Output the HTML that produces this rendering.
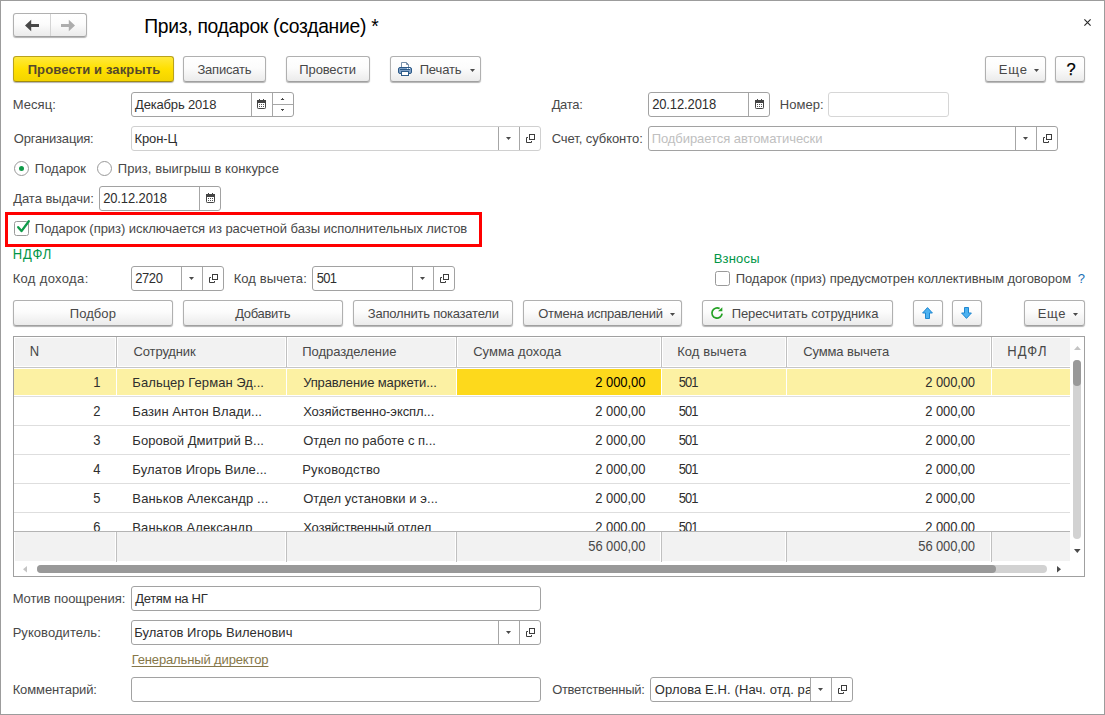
<!DOCTYPE html>
<html lang="ru">
<head>
<meta charset="utf-8">
<title>Приз, подарок (создание) *</title>
<style>
*{box-sizing:border-box;margin:0;padding:0}
html,body{width:1105px;height:715px;overflow:hidden;background:#fff}
body{font-family:"Liberation Sans",sans-serif;font-size:13px;color:#484848;position:relative;--sep:#a6a6a6}
#win{position:absolute;left:0;top:0;width:1105px;height:715px;border:1px solid #9c9c9c;background:#fff}
.a{position:absolute}
.t{position:absolute;white-space:nowrap}
.v{color:#2e2e2e}
.btn{position:absolute;border:1px solid #b0b0b0;border-bottom-color:#a0a0a0;border-radius:3px;background:linear-gradient(#ffffff 0%,#fcfcfc 45%,#ebebeb 100%);box-shadow:0 1px 1px rgba(0,0,0,.3)}
.btn.def{background:linear-gradient(#ffe93c 0%,#ffe000 50%,#f3d400 100%);border-color:#b9a21c;border-bottom-color:#a08a10}
.inp{position:absolute;border:1px solid #a2a2a2;border-radius:3px;background:#fff}
.inp.ro{border-color:#d6d6d6}
.inp.lt{border-color:#d0d0d0}
svg{position:absolute;display:block;overflow:visible}
</style>
</head>
<body>
<div id="win"></div>
<div class="btn " style="left:13px;top:13px;width:74px;height:24px"></div>
<div class="a" style="left:50px;top:14px;width:1px;height:22px;background:#d4d4d4"></div>
<svg style="left:25px;top:20px" width="14" height="11" viewBox="0 0 14 11"><path d="M0 5.5L6.2 -0.3V4H14V7H6.2V11.3Z" fill="#484848"/></svg>
<svg style="left:61px;top:20px" width="14" height="11" viewBox="0 0 14 11"><path d="M14 5.5L7.8 -0.3V4H0V7H7.8V11.3Z" fill="#adadad"/></svg>
<div class="t" style="left:144.15px;top:16px;line-height:21px;font-size:19.3px;letter-spacing:-0.278px;color:#000;transform:scaleY(1.02);transform-origin:0 17px;">Приз, подарок (создание) *</div>
<svg style="left:1084px;top:19px" width="7" height="7" viewBox="0 0 7 7"><path d="M0.4 0.4L6.6 6.6M6.6 0.4L0.4 6.6" stroke="#2a2a2a" stroke-width="1.15" fill="none"/></svg>
<div class="btn def" style="left:13px;top:56px;width:161px;height:26px"></div>
<div class="t" style="left:27.65px;top:62px;line-height:15px;font-weight:bold;letter-spacing:0.127px;color:#55492c;">Провести и закрыть</div>
<div class="btn " style="left:183px;top:56px;width:83px;height:26px"></div>
<div class="t" style="left:197.45px;top:62px;line-height:15px;letter-spacing:-0.226px;">Записать</div>
<div class="btn " style="left:286px;top:56px;width:84px;height:26px"></div>
<div class="t" style="left:299.35px;top:62px;line-height:15px;letter-spacing:-0.135px;">Провести</div>
<div class="btn " style="left:390px;top:56px;width:91px;height:26px"></div>
<div class="t" style="left:419.65px;top:62px;line-height:15px;letter-spacing:-0.123px;">Печать</div>
<svg style="left:398px;top:62px" width="14" height="14" viewBox="0 0 14 14"><path d="M3.5 5.5V0.5H8.5L10.5 2.5V5.5" fill="#fff" stroke="#7890aa"/><path d="M8.5 0.5V2.5H10.5" fill="none" stroke="#7890aa"/><rect x="0.5" y="5.5" width="13" height="6" rx="1.5" fill="#7fa0c6" stroke="#2c5a88"/><rect x="2" y="7" width="10" height="1" fill="#2c5a88"/><rect x="9" y="6" width="1" height="1" fill="#fff"/><rect x="11" y="6" width="1" height="1" fill="#fff"/><rect x="3.5" y="9.5" width="7" height="4" fill="#fff" stroke="#2c5a88"/></svg>
<svg style="left:470px;top:69px" width="5" height="3" viewBox="0 0 5 3"><path d="M0 0H5L2.5 3Z" fill="#4a4a4a"/></svg>
<div class="btn " style="left:985px;top:56px;width:61px;height:26px"></div>
<div class="t" style="left:998.65px;top:62px;line-height:15px;letter-spacing:0.890px;">Еще</div>
<svg style="left:1034px;top:69px" width="5" height="3" viewBox="0 0 5 3"><path d="M0 0H5L2.5 3Z" fill="#4a4a4a"/></svg>
<div class="btn " style="left:1055px;top:56px;width:30px;height:26px"></div>
<div class="t" style="left:1066.45px;top:60px;line-height:18px;font-size:16.5px;color:#000;-webkit-text-stroke:0.25px #000;">?</div>
<div class="t" style="left:12.85px;top:97px;line-height:15px;letter-spacing:0.022px;">Месяц:</div>
<div class="inp " style="left:131px;top:92px;width:163px;height:25px"></div>
<div class="a" style="left:251px;top:93px;width:1px;height:23px;background:var(--sep)"></div>
<div class="a" style="left:272px;top:93px;width:1px;height:23px;background:var(--sep)"></div>
<div class="t v" style="left:135.05px;top:97px;line-height:15px;letter-spacing:-0.172px;">Декабрь 2018</div>
<svg style="left:257px;top:99px" width="9" height="10" viewBox="0 0 9 10"><rect x="0.5" y="1.5" width="8" height="8" rx="0.8" fill="#fff" stroke="#444"/><rect x="0" y="1" width="9" height="3" fill="#444"/><rect x="2" y="0" width="1" height="2" fill="#444"/><rect x="6" y="0" width="1" height="2" fill="#444"/><path d="M2 5h1v1h-1zM4 5h1v1h-1zM6 5h1v1h-1zM2 7h1v1h-1zM4 7h1v1h-1zM6 7h1v1h-1z" fill="#555"/></svg>
<div class="a" style="left:273px;top:104px;width:20px;height:1px;background:var(--sep)"></div>
<svg style="left:280px;top:98px" width="5" height="2" viewBox="0 0 5 2"><path d="M2 0H3V1H2ZM1 1H4V2H1Z" fill="#4a4a4a"/><path d="M0.4 2H1V1.4ZM4.6 2H4V1.4Z" fill="#4a4a4a" opacity=".5"/></svg>
<svg style="left:280px;top:109px" width="5" height="2" viewBox="0 0 5 2"><path d="M1 0H4V1H1ZM2 1H3V2H2Z" fill="#4a4a4a"/></svg>
<div class="t" style="left:551.65px;top:97px;line-height:15px;letter-spacing:-0.322px;">Дата:</div>
<div class="inp " style="left:648px;top:92px;width:122px;height:25px"></div>
<div class="a" style="left:748px;top:93px;width:1px;height:23px;background:var(--sep)"></div>
<svg style="left:755px;top:99px" width="9" height="10" viewBox="0 0 9 10"><rect x="0.5" y="1.5" width="8" height="8" rx="0.8" fill="#fff" stroke="#444"/><rect x="0" y="1" width="9" height="3" fill="#444"/><rect x="2" y="0" width="1" height="2" fill="#444"/><rect x="6" y="0" width="1" height="2" fill="#444"/><path d="M2 5h1v1h-1zM4 5h1v1h-1zM6 5h1v1h-1zM2 7h1v1h-1zM4 7h1v1h-1zM6 7h1v1h-1z" fill="#555"/></svg>
<div class="t v" style="left:652.15px;top:97px;line-height:15px;letter-spacing:-0.115px;transform:scaleY(1.07);transform-origin:0 12px;">20.12.2018</div>
<div class="t" style="left:779.85px;top:97px;line-height:15px;letter-spacing:0.017px;">Номер:</div>
<div class="inp ro" style="left:828px;top:92px;width:121px;height:25px"></div>
<div class="t" style="left:13.85px;top:131px;line-height:15px;letter-spacing:-0.201px;">Организация:</div>
<div class="inp lt" style="left:131px;top:126px;width:410px;height:25px"></div>
<div class="a" style="left:498px;top:127px;width:1px;height:23px;background:var(--sep)"></div>
<div class="a" style="left:519px;top:127px;width:1px;height:23px;background:var(--sep)"></div>
<svg style="left:506px;top:137px" width="5" height="3" viewBox="0 0 5 3"><path d="M0 0H5L2.5 3Z" fill="#4a4a4a"/></svg>
<svg style="left:526px;top:134px" width="9" height="9" viewBox="0 0 9 9"><rect x="3.5" y="0.5" width="5" height="5" fill="none" stroke="#3c3c3c"/><path d="M2 3.5H0.5V8.5H5.5V7" fill="none" stroke="#3c3c3c"/></svg>
<div class="t v" style="left:134.55px;top:131px;line-height:15px;letter-spacing:-0.128px;">Крон-Ц</div>
<div class="t" style="left:551.65px;top:131px;line-height:15px;letter-spacing:-0.066px;">Счет, субконто:</div>
<div class="inp " style="left:648px;top:126px;width:410px;height:25px"></div>
<div class="a" style="left:1015px;top:127px;width:1px;height:23px;background:var(--sep)"></div>
<div class="a" style="left:1036px;top:127px;width:1px;height:23px;background:var(--sep)"></div>
<svg style="left:1023px;top:137px" width="5" height="3" viewBox="0 0 5 3"><path d="M0 0H5L2.5 3Z" fill="#4a4a4a"/></svg>
<svg style="left:1043px;top:134px" width="9" height="9" viewBox="0 0 9 9"><rect x="3.5" y="0.5" width="5" height="5" fill="none" stroke="#3c3c3c"/><path d="M2 3.5H0.5V8.5H5.5V7" fill="none" stroke="#3c3c3c"/></svg>
<div class="t" style="left:651.65px;top:131px;line-height:15px;letter-spacing:-0.061px;color:#c0c0c0;">Подбирается автоматически</div>
<div class="a" style="left:14px;top:161px;width:15px;height:15px;border:1px solid #999;border-radius:50%;background:#fff"></div>
<div class="a" style="left:19px;top:166px;width:5px;height:5px;border-radius:50%;background:#0f9a48"></div>
<div class="t" style="left:34.85px;top:161px;line-height:15px;letter-spacing:-0.011px;">Подарок</div>
<div class="a" style="left:97px;top:161px;width:15px;height:15px;border:1px solid #999;border-radius:50%;background:#fff"></div>
<div class="t" style="left:117.85px;top:161px;line-height:15px;letter-spacing:0.054px;">Приз, выигрыш в конкурсе</div>
<div class="t" style="left:13.15px;top:191px;line-height:15px;letter-spacing:-0.019px;">Дата выдачи:</div>
<div class="inp " style="left:99px;top:186px;width:122px;height:25px"></div>
<div class="a" style="left:199px;top:187px;width:1px;height:23px;background:var(--sep)"></div>
<svg style="left:206px;top:193px" width="9" height="10" viewBox="0 0 9 10"><rect x="0.5" y="1.5" width="8" height="8" rx="0.8" fill="#fff" stroke="#444"/><rect x="0" y="1" width="9" height="3" fill="#444"/><rect x="2" y="0" width="1" height="2" fill="#444"/><rect x="6" y="0" width="1" height="2" fill="#444"/><path d="M2 5h1v1h-1zM4 5h1v1h-1zM6 5h1v1h-1zM2 7h1v1h-1zM4 7h1v1h-1zM6 7h1v1h-1z" fill="#555"/></svg>
<div class="t v" style="left:103.15px;top:191px;line-height:15px;letter-spacing:-0.126px;transform:scaleY(1.07);transform-origin:0 12px;">20.12.2018</div>
<div class="a" style="left:5px;top:212px;width:477px;height:35px;border:3px solid #ff0000"></div>
<div class="a" style="left:14px;top:221px;width:15px;height:15px;border:1px solid #9a9a9a;border-radius:2.5px;background:#fff"></div>
<svg style="left:14px;top:218px" width="18" height="18" viewBox="0 0 18 18"><path d="M4.2 9.2L7.5 13.1L14.8 3.2" fill="none" stroke="#0f9b4a" stroke-width="2.3" stroke-linecap="round" stroke-linejoin="round"/></svg>
<div class="t" style="left:34.85px;top:221px;line-height:15px;letter-spacing:-0.044px;">Подарок (приз) исключается из расчетной базы исполнительных листов</div>
<div class="t" style="left:12.85px;top:247px;line-height:15px;letter-spacing:0.881px;color:#009646;transform:scaleY(1.07);transform-origin:0 12px;">НДФЛ</div>
<div class="t" style="left:713.65px;top:251px;line-height:15px;letter-spacing:0.192px;color:#009646;">Взносы</div>
<div class="t" style="left:12.65px;top:271px;line-height:15px;letter-spacing:0.350px;">Код дохода:</div>
<div class="inp " style="left:131px;top:266px;width:93px;height:25px"></div>
<div class="a" style="left:181px;top:267px;width:1px;height:23px;background:var(--sep)"></div>
<div class="a" style="left:202px;top:267px;width:1px;height:23px;background:var(--sep)"></div>
<svg style="left:189px;top:277px" width="5" height="3" viewBox="0 0 5 3"><path d="M0 0H5L2.5 3Z" fill="#4a4a4a"/></svg>
<svg style="left:209px;top:274px" width="9" height="9" viewBox="0 0 9 9"><rect x="3.5" y="0.5" width="5" height="5" fill="none" stroke="#3c3c3c"/><path d="M2 3.5H0.5V8.5H5.5V7" fill="none" stroke="#3c3c3c"/></svg>
<div class="t v" style="left:135.15px;top:271px;line-height:15px;letter-spacing:-0.397px;transform:scaleY(1.07);transform-origin:0 12px;">2720</div>
<div class="t" style="left:233.65px;top:271px;line-height:15px;letter-spacing:0.093px;">Код вычета:</div>
<div class="inp " style="left:312px;top:266px;width:143px;height:25px"></div>
<div class="a" style="left:412px;top:267px;width:1px;height:23px;background:var(--sep)"></div>
<div class="a" style="left:433px;top:267px;width:1px;height:23px;background:var(--sep)"></div>
<svg style="left:420px;top:277px" width="5" height="3" viewBox="0 0 5 3"><path d="M0 0H5L2.5 3Z" fill="#4a4a4a"/></svg>
<svg style="left:440px;top:274px" width="9" height="9" viewBox="0 0 9 9"><rect x="3.5" y="0.5" width="5" height="5" fill="none" stroke="#3c3c3c"/><path d="M2 3.5H0.5V8.5H5.5V7" fill="none" stroke="#3c3c3c"/></svg>
<div class="t v" style="left:316.65px;top:271px;line-height:15px;letter-spacing:-0.730px;transform:scaleY(1.07);transform-origin:0 12px;">501</div>
<div class="a" style="left:715px;top:271px;width:15px;height:15px;border:1px solid #9a9a9a;border-radius:2.5px;background:#fff"></div>
<div class="t" style="left:735.65px;top:271px;line-height:15px;letter-spacing:-0.041px;">Подарок (приз) предусмотрен коллективным договором</div>
<div class="t" style="left:1077.85px;top:271px;line-height:15px;color:#1a6fb5;">?</div>
<div class="btn " style="left:13px;top:300px;width:160px;height:26px"></div>
<div class="t" style="left:69.85px;top:306px;line-height:15px;letter-spacing:0.050px;">Подбор</div>
<div class="btn " style="left:183px;top:300px;width:160px;height:26px"></div>
<div class="t" style="left:235.15px;top:306px;line-height:15px;letter-spacing:-0.311px;">Добавить</div>
<div class="btn " style="left:353px;top:300px;width:160px;height:26px"></div>
<div class="t" style="left:367.85px;top:306px;line-height:15px;letter-spacing:-0.213px;">Заполнить показатели</div>
<div class="btn " style="left:523px;top:300px;width:159px;height:26px"></div>
<div class="t" style="left:538.15px;top:306px;line-height:15px;letter-spacing:-0.216px;">Отмена исправлений</div>
<svg style="left:670px;top:313px" width="5" height="3" viewBox="0 0 5 3"><path d="M0 0H5L2.5 3Z" fill="#4a4a4a"/></svg>
<div class="btn " style="left:702px;top:300px;width:191px;height:26px"></div>
<div class="t" style="left:731.65px;top:306px;line-height:15px;letter-spacing:-0.081px;">Пересчитать сотрудника</div>
<svg style="left:711px;top:307px" width="12" height="12" viewBox="0 0 12 12"><path d="M11.1 6.7A5.1 5.1 0 1 1 8.6 1.6" fill="none" stroke="#22a022" stroke-width="1.7"/><path d="M7 4.3L11.3 0.2V4.3Z" fill="#22a022"/></svg>
<div class="btn " style="left:913px;top:300px;width:30px;height:26px"></div>
<svg style="left:922px;top:307px" width="11" height="12" viewBox="0 0 11 12"><path d="M5.5 0.6L10.4 6H7.5V11.5H3.5V6H0.6Z" fill="#4db2f0" stroke="#1f87d1"/></svg>
<div class="btn " style="left:952px;top:300px;width:30px;height:26px"></div>
<svg style="left:961px;top:307px" width="11" height="12" viewBox="0 0 11 12"><path d="M5.5 11.4L10.4 6H7.5V0.5H3.5V6H0.6Z" fill="#4db2f0" stroke="#1f87d1"/></svg>
<div class="btn " style="left:1024px;top:300px;width:61px;height:26px"></div>
<div class="t" style="left:1037.65px;top:306px;line-height:15px;letter-spacing:0.740px;">Еще</div>
<svg style="left:1073px;top:313px" width="5" height="3" viewBox="0 0 5 3"><path d="M0 0H5L2.5 3Z" fill="#4a4a4a"/></svg>
<div class="a" style="left:13px;top:336px;width:1072px;height:241px;border:1px solid #a0a0a0;background:#fff"></div>
<div class="a" style="left:15px;top:338px;width:1055px;height:28px;background:#f2f2f2"></div>
<div class="a" style="left:14px;top:367px;width:1056px;height:1px;background:#c6c6c6"></div>
<div class="t" style="left:29.65px;top:344px;line-height:15px;transform:scaleY(1.07);transform-origin:0 12px;">N</div>
<div class="a" style="left:115px;top:337px;width:3px;height:30px;background:#fff"></div>
<div class="a" style="left:116px;top:337px;width:1px;height:30px;background:#c0c0c0"></div>
<div class="t" style="left:133.55px;top:344px;line-height:15px;letter-spacing:-0.133px;">Сотрудник</div>
<div class="a" style="left:285px;top:337px;width:3px;height:30px;background:#fff"></div>
<div class="a" style="left:286px;top:337px;width:1px;height:30px;background:#c0c0c0"></div>
<div class="t" style="left:302.25px;top:344px;line-height:15px;letter-spacing:-0.050px;">Подразделение</div>
<div class="a" style="left:455px;top:337px;width:3px;height:30px;background:#fff"></div>
<div class="a" style="left:456px;top:337px;width:1px;height:30px;background:#c0c0c0"></div>
<div class="t" style="left:473.15px;top:344px;line-height:15px;letter-spacing:0.072px;">Сумма дохода</div>
<div class="a" style="left:660px;top:337px;width:3px;height:30px;background:#fff"></div>
<div class="a" style="left:661px;top:337px;width:1px;height:30px;background:#c0c0c0"></div>
<div class="t" style="left:677.15px;top:344px;line-height:15px;letter-spacing:0.073px;">Код вычета</div>
<div class="a" style="left:785px;top:337px;width:3px;height:30px;background:#fff"></div>
<div class="a" style="left:786px;top:337px;width:1px;height:30px;background:#c0c0c0"></div>
<div class="t" style="left:803.15px;top:344px;line-height:15px;letter-spacing:-0.108px;">Сумма вычета</div>
<div class="a" style="left:990px;top:337px;width:3px;height:30px;background:#fff"></div>
<div class="a" style="left:991px;top:337px;width:1px;height:30px;background:#c0c0c0"></div>
<div class="t" style="left:1007.15px;top:344px;line-height:15px;letter-spacing:1.147px;transform:scaleY(1.07);transform-origin:0 12px;">НДФЛ</div>
<div class="a" style="left:14px;top:368px;width:1056px;height:163px;overflow:hidden">
<div class="a" style="left:0px;top:1px;width:1056px;height:26px;background:#fcf1a3"></div>
<div class="a" style="left:443px;top:1px;width:205px;height:26px;background:#fdd91c"></div>
<div class="a" style="left:102px;top:1px;width:1px;height:26px;background:#fff"></div>
<div class="a" style="left:272px;top:1px;width:1px;height:26px;background:#fff"></div>
<div class="a" style="left:442px;top:1px;width:1px;height:26px;background:#fff"></div>
<div class="a" style="left:647px;top:1px;width:1px;height:26px;background:#fff"></div>
<div class="a" style="left:772px;top:1px;width:1px;height:26px;background:#fff"></div>
<div class="a" style="left:977px;top:1px;width:1px;height:26px;background:#fff"></div>
<div class="a" style="left:0px;top:28px;width:1056px;height:1px;background:#dedede"></div>
<div class="t v" style="left:79.15px;top:7px;line-height:15px;transform:scaleY(1.07);transform-origin:0 12px;">1</div>
<div class="t v" style="left:118.35px;top:7px;line-height:15px;letter-spacing:0.063px;">Бальцер Герман Эд...</div>
<div class="t v" style="left:289.15px;top:7px;line-height:15px;letter-spacing:-0.117px;">Управление маркети...</div>
<div class="t v" style="left:581.35px;top:7px;line-height:15px;letter-spacing:-0.082px;color:#000;transform:scaleY(1.07);transform-origin:0 12px;">2 000,00</div>
<div class="t v" style="left:664.85px;top:7px;line-height:15px;letter-spacing:-0.980px;transform:scaleY(1.07);transform-origin:0 12px;">501</div>
<div class="t v" style="left:911.35px;top:7px;line-height:15px;letter-spacing:-0.125px;transform:scaleY(1.07);transform-origin:0 12px;">2 000,00</div>
<div class="a" style="left:0px;top:57px;width:1056px;height:1px;background:#dedede"></div>
<div class="t v" style="left:79.15px;top:36px;line-height:15px;transform:scaleY(1.07);transform-origin:0 12px;">2</div>
<div class="t v" style="left:118.35px;top:36px;line-height:15px;letter-spacing:0.060px;">Базин Антон Влади...</div>
<div class="t v" style="left:289.15px;top:36px;line-height:15px;letter-spacing:-0.077px;">Хозяйственно-экспл...</div>
<div class="t v" style="left:581.35px;top:36px;line-height:15px;letter-spacing:-0.082px;transform:scaleY(1.07);transform-origin:0 12px;">2 000,00</div>
<div class="t v" style="left:664.85px;top:36px;line-height:15px;letter-spacing:-0.980px;transform:scaleY(1.07);transform-origin:0 12px;">501</div>
<div class="t v" style="left:911.35px;top:36px;line-height:15px;letter-spacing:-0.125px;transform:scaleY(1.07);transform-origin:0 12px;">2 000,00</div>
<div class="a" style="left:0px;top:86px;width:1056px;height:1px;background:#dedede"></div>
<div class="t v" style="left:79.15px;top:65px;line-height:15px;transform:scaleY(1.07);transform-origin:0 12px;">3</div>
<div class="t v" style="left:118.35px;top:65px;line-height:15px;letter-spacing:0.037px;">Боровой Дмитрий В...</div>
<div class="t v" style="left:289.15px;top:65px;line-height:15px;letter-spacing:0.011px;">Отдел по работе с п...</div>
<div class="t v" style="left:581.35px;top:65px;line-height:15px;letter-spacing:-0.082px;transform:scaleY(1.07);transform-origin:0 12px;">2 000,00</div>
<div class="t v" style="left:664.85px;top:65px;line-height:15px;letter-spacing:-0.980px;transform:scaleY(1.07);transform-origin:0 12px;">501</div>
<div class="t v" style="left:911.35px;top:65px;line-height:15px;letter-spacing:-0.125px;transform:scaleY(1.07);transform-origin:0 12px;">2 000,00</div>
<div class="a" style="left:0px;top:115px;width:1056px;height:1px;background:#dedede"></div>
<div class="t v" style="left:79.15px;top:94px;line-height:15px;transform:scaleY(1.07);transform-origin:0 12px;">4</div>
<div class="t v" style="left:118.35px;top:94px;line-height:15px;letter-spacing:0.092px;">Булатов Игорь Виле...</div>
<div class="t v" style="left:288.15px;top:94px;line-height:15px;letter-spacing:0.196px;">Руководство</div>
<div class="t v" style="left:581.35px;top:94px;line-height:15px;letter-spacing:-0.082px;transform:scaleY(1.07);transform-origin:0 12px;">2 000,00</div>
<div class="t v" style="left:664.85px;top:94px;line-height:15px;letter-spacing:-0.980px;transform:scaleY(1.07);transform-origin:0 12px;">501</div>
<div class="t v" style="left:911.35px;top:94px;line-height:15px;letter-spacing:-0.125px;transform:scaleY(1.07);transform-origin:0 12px;">2 000,00</div>
<div class="a" style="left:0px;top:144px;width:1056px;height:1px;background:#dedede"></div>
<div class="t v" style="left:79.15px;top:123px;line-height:15px;transform:scaleY(1.07);transform-origin:0 12px;">5</div>
<div class="t v" style="left:118.35px;top:123px;line-height:15px;letter-spacing:0.149px;">Ваньков Александр ...</div>
<div class="t v" style="left:289.15px;top:123px;line-height:15px;letter-spacing:0.071px;">Отдел установки и э...</div>
<div class="t v" style="left:581.35px;top:123px;line-height:15px;letter-spacing:-0.082px;transform:scaleY(1.07);transform-origin:0 12px;">2 000,00</div>
<div class="t v" style="left:664.85px;top:123px;line-height:15px;letter-spacing:-0.980px;transform:scaleY(1.07);transform-origin:0 12px;">501</div>
<div class="t v" style="left:911.35px;top:123px;line-height:15px;letter-spacing:-0.125px;transform:scaleY(1.07);transform-origin:0 12px;">2 000,00</div>
<div class="a" style="left:0px;top:173px;width:1056px;height:1px;background:#dedede"></div>
<div class="t v" style="left:79.15px;top:152px;line-height:15px;transform:scaleY(1.07);transform-origin:0 12px;">6</div>
<div class="t v" style="left:118.35px;top:152px;line-height:15px;letter-spacing:0.097px;">Ваньков Александр</div>
<div class="t v" style="left:289.15px;top:152px;line-height:15px;letter-spacing:-0.180px;">Хозяйственный отдел</div>
<div class="t v" style="left:581.35px;top:152px;line-height:15px;letter-spacing:-0.082px;transform:scaleY(1.07);transform-origin:0 12px;">2 000,00</div>
<div class="t v" style="left:664.85px;top:152px;line-height:15px;letter-spacing:-0.980px;transform:scaleY(1.07);transform-origin:0 12px;">501</div>
<div class="t v" style="left:911.35px;top:152px;line-height:15px;letter-spacing:-0.125px;transform:scaleY(1.07);transform-origin:0 12px;">2 000,00</div>
</div>
<div class="a" style="left:15px;top:531px;width:1055px;height:30px;background:#f2f2f2"></div>
<div class="a" style="left:14px;top:531px;width:1056px;height:1px;background:#b4b4b4"></div>
<div class="a" style="left:115px;top:532px;width:1px;height:30px;background:#fff"></div>
<div class="a" style="left:116px;top:532px;width:1px;height:30px;background:#c0c0c0"></div>
<div class="a" style="left:285px;top:532px;width:1px;height:30px;background:#fff"></div>
<div class="a" style="left:286px;top:532px;width:1px;height:30px;background:#c0c0c0"></div>
<div class="a" style="left:455px;top:532px;width:1px;height:30px;background:#fff"></div>
<div class="a" style="left:456px;top:532px;width:1px;height:30px;background:#c0c0c0"></div>
<div class="a" style="left:660px;top:532px;width:1px;height:30px;background:#fff"></div>
<div class="a" style="left:661px;top:532px;width:1px;height:30px;background:#c0c0c0"></div>
<div class="a" style="left:785px;top:532px;width:1px;height:30px;background:#fff"></div>
<div class="a" style="left:786px;top:532px;width:1px;height:30px;background:#c0c0c0"></div>
<div class="a" style="left:990px;top:532px;width:1px;height:30px;background:#fff"></div>
<div class="a" style="left:991px;top:532px;width:1px;height:30px;background:#c0c0c0"></div>
<div class="t" style="left:588.35px;top:539px;line-height:15px;letter-spacing:-0.100px;transform:scaleY(1.07);transform-origin:0 12px;">56 000,00</div>
<div class="t" style="left:918.35px;top:539px;line-height:15px;letter-spacing:-0.138px;transform:scaleY(1.07);transform-origin:0 12px;">56 000,00</div>
<div class="a" style="left:1073px;top:360px;width:8px;height:179px;background:#d2d2d2;border-radius:4px"></div>
<div class="a" style="left:1073px;top:360px;width:8px;height:26px;background:#999;border-radius:4px"></div>
<svg style="left:1073.5px;top:346px" width="7" height="4" viewBox="0 0 7 4"><path d="M0 4H7L3.5 0Z" fill="#c4c4c4"/></svg>
<svg style="left:1073.7px;top:549px" width="6.6" height="4" viewBox="0 0 6.6 4"><path d="M0 0H6.6L3.3 4Z" fill="#4a4a4a"/></svg>
<div class="a" style="left:37px;top:565px;width:1010px;height:8px;background:#d2d2d2;border-radius:4px"></div>
<div class="a" style="left:37px;top:565px;width:959px;height:8px;background:#999;border-radius:4px"></div>
<svg style="left:23px;top:566px" width="4" height="6.4" viewBox="0 0 4 6.4"><path d="M4 0V6.4L0 3.2Z" fill="#c4c4c4"/></svg>
<svg style="left:1057px;top:566px" width="4" height="6.4" viewBox="0 0 4 6.4"><path d="M0 0V6.4L4 3.2Z" fill="#4a4a4a"/></svg>
<div class="t" style="left:12.65px;top:591px;line-height:15px;letter-spacing:-0.053px;">Мотив поощрения:</div>
<div class="inp " style="left:131px;top:586px;width:410px;height:25px"></div>
<div class="t v" style="left:135.15px;top:591px;line-height:15px;letter-spacing:-0.305px;">Детям на НГ</div>
<div class="t" style="left:12.65px;top:625px;line-height:15px;letter-spacing:0.062px;">Руководитель:</div>
<div class="inp " style="left:131px;top:620px;width:410px;height:25px"></div>
<div class="a" style="left:498px;top:621px;width:1px;height:23px;background:var(--sep)"></div>
<div class="a" style="left:519px;top:621px;width:1px;height:23px;background:var(--sep)"></div>
<svg style="left:506px;top:631px" width="5" height="3" viewBox="0 0 5 3"><path d="M0 0H5L2.5 3Z" fill="#4a4a4a"/></svg>
<svg style="left:526px;top:628px" width="9" height="9" viewBox="0 0 9 9"><rect x="3.5" y="0.5" width="5" height="5" fill="none" stroke="#3c3c3c"/><path d="M2 3.5H0.5V8.5H5.5V7" fill="none" stroke="#3c3c3c"/></svg>
<div class="t v" style="left:134.15px;top:625px;line-height:15px;letter-spacing:0.045px;">Булатов Игорь Виленович</div>
<div class="t" style="left:131.65px;top:652px;line-height:15px;letter-spacing:-0.132px;color:#857648;text-decoration:underline;text-underline-offset:2px;text-decoration-skip-ink:none;text-decoration-thickness:1px;">Генеральный директор</div>
<div class="t" style="left:12.65px;top:682px;line-height:15px;letter-spacing:-0.107px;">Комментарий:</div>
<div class="inp " style="left:131px;top:677px;width:410px;height:25px"></div>
<div class="t" style="left:552.15px;top:682px;line-height:15px;letter-spacing:-0.295px;">Ответственный:</div>
<div class="inp " style="left:650px;top:677px;width:203px;height:25px"></div>
<div class="a" style="left:810px;top:678px;width:1px;height:23px;background:var(--sep)"></div>
<div class="a" style="left:831px;top:678px;width:1px;height:23px;background:var(--sep)"></div>
<svg style="left:818px;top:688px" width="5" height="3" viewBox="0 0 5 3"><path d="M0 0H5L2.5 3Z" fill="#4a4a4a"/></svg>
<svg style="left:838px;top:685px" width="9" height="9" viewBox="0 0 9 9"><rect x="3.5" y="0.5" width="5" height="5" fill="none" stroke="#3c3c3c"/><path d="M2 3.5H0.5V8.5H5.5V7" fill="none" stroke="#3c3c3c"/></svg>
<div class="a" style="left:651px;top:678px;width:158.5px;height:23px;overflow:hidden">
<div class="t v" style="left:3.85px;top:4px;line-height:15px;letter-spacing:0.106px;">Орлова Е.Н. (Нач. отд. ра</div>
</div>
</body>
</html>
